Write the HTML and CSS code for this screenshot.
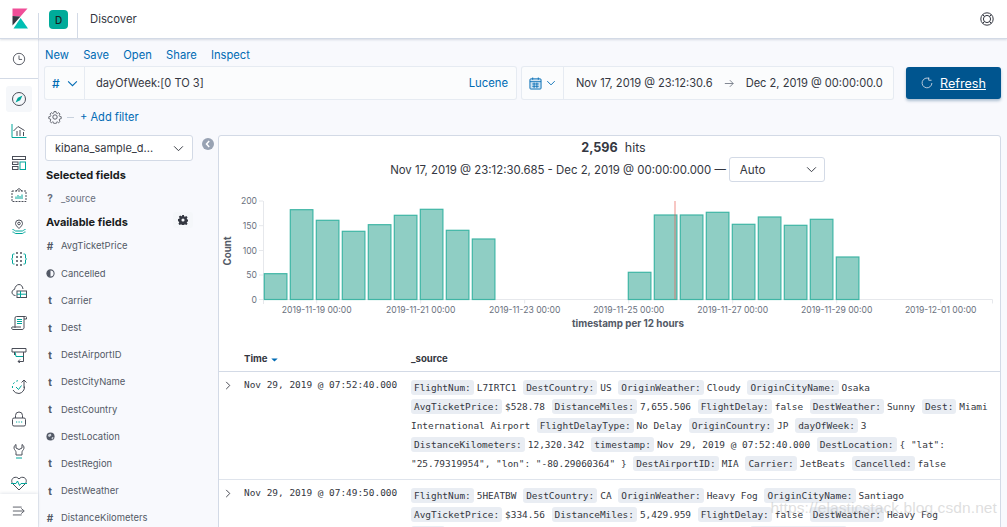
FILE: index.html
```html
<!DOCTYPE html>
<html lang="en">
<head>
<meta charset="utf-8">
<title>Discover - Kibana</title>
<link rel="stylesheet" href="styles.css">
</head>
<body>
<header class="topbar">
  <div class="logo-cell">
    <svg class="logo" viewBox="12 8 17 21" width="17" height="21"><path fill="#f04e98" d="M12.5 8.5H27.5L20.5 16.6 12.5 16Z"/><path fill="#343741" d="M12.5 16 20.5 16.6 12.5 25.5Z"/><path fill="#00bfb3" d="M13.5 28.5 20.6 18 28 28.5Z"/></svg>
  </div>
  <div class="space-cell"><span class="avatar">D</span></div>
  <div class="crumb">Discover</div>
  <svg class="help" viewBox="0 0 14 14" width="14" height="14" fill="none" stroke="#343741"><circle cx="7" cy="7" r="6.2"/><circle cx="7" cy="7" r="3.6"/><path d="M2.6 2.6 4.5 4.5M11.4 2.6 9.5 4.5M2.6 11.4 4.5 9.5M11.4 11.4 9.5 9.5"/></svg>
</header>
<div class="shell">
  <nav class="sidenav">
    <div class="recent">
      <svg viewBox="0 0 16 16" width="14" height="14" fill="none" stroke="#4a4e58"><circle cx="8" cy="8" r="6.5"/><path d="M8 4v4.5h3.5"/></svg>
    </div>
    <ul class="navlist">
      <li class="active"><svg viewBox="0 0 16 16" width="16" height="16" fill="none" stroke="#4a4e58"><circle cx="8" cy="8" r="6.5"/><path fill="#00a69b" stroke="none" d="M11.5 4.5 9.2 9.2 4.5 11.5 6.8 6.8Z"/></svg></li>
      <li><svg viewBox="0 0 16 16" width="16" height="16" fill="none" stroke="#4a4e58"><path d="M1 1v13.5h14.5" stroke="#00a69b"/><path d="M2.5 8 7 3.500 13.500 7.500"/><path d="M6 13V8M9 13V7M12.500 13V9"/></svg></li>
      <li><svg viewBox="0 0 16 16" width="16" height="16" fill="none" stroke="#4a4e58"><rect x="1.500" y="1.500" width="13" height="3"/><rect x="1.500" y="7" width="5.500" height="2.500"/><rect x="1.500" y="11.500" width="5.500" height="3"/><rect x="9" y="7" width="5.500" height="7.500" stroke="#00a69b"/></svg></li>
      <li><svg viewBox="0 0 16 16" width="16" height="16" fill="none" stroke="#4a4e58"><rect x="1" y="4" width="14" height="10.500" stroke-dasharray="2 1"/><path d="M5 4 8 1.500 11 4"/><path stroke="#00a69b" d="M5 12V9.500M7 12V8M9 12V9M11 12V7.500"/></svg></li>
      <li><svg viewBox="0 0 16 16" width="16" height="16" fill="none" stroke="#4a4e58"><path d="M8 9.500C6 7.500 4.500 6 4.500 4.500a3.500 3.500 0 0 1 7 0C11.500 6 10 7.500 8 9.500Z"/><circle cx="8" cy="4.500" r="1.300"/><path stroke="#00a69b" d="M1.500 10.500c2 0 2 1.500 3.200 1.500h6.600c1.200 0 1.200-1.500 3.200-1.500M1.500 13c2 0 2 1.500 3.200 1.500h6.600c1.200 0 1.200-1.500 3.200-1.500"/></svg></li>
      <li><svg viewBox="0 0 16 16" width="16" height="16" fill="none" stroke="#00a69b"><path d="M3.500 3H2.500a1 1 0 0 0-1 1V7L.5 8l1 1v3a1 1 0 0 0 1 1h1M12.500 3h1a1 1 0 0 1 1 1V7l1 1-1 1v3a1 1 0 0 1-1 1h-1"/><g fill="#4a4e58" stroke="none"><circle cx="6" cy="2" r="1"/><circle cx="10" cy="2" r="1"/><circle cx="6" cy="6" r="1"/><circle cx="10" cy="6" r="1"/><circle cx="6" cy="10" r="1"/><circle cx="10" cy="10" r="1"/><circle cx="6" cy="14" r="1"/><circle cx="10" cy="14" r="1"/></g></svg></li>
      <li><svg viewBox="0 0 16 16" width="16" height="16" fill="none" stroke="#4a4e58"><path d="M4.500 12.500C2 12.500.8 10.500 1 9c.2-1.500 1.500-2.500 2.500-2.500C4 3.500 6 1.500 8 1.500c2 0 3.500 1.500 4 4.500"/><rect x="6" y="8" width="9.500" height="6.500"/><path stroke="#00a69b" d="M6 11.200h9.500M9.500 8v6.500"/></svg></li>
      <li><svg viewBox="0 0 16 16" width="16" height="16" fill="none" stroke="#4a4e58"><path d="M4 13V3a1.500 1.500 0 0 1 1.500-1.500H14.500a1 1 0 0 1 1 1V4H13"/><path d="M13 2v10a2 2 0 0 1-2 2.500H2a1.500 1.500 0 0 1-1-2.500h9"/><path stroke="#00a69b" d="M6 4.500h5M6 6.500h5M6 8.500h5"/></svg></li>
      <li><svg viewBox="0 0 16 16" width="16" height="16" fill="none" stroke="#4a4e58"><path d="M1 1.500h14v3.500H1Z"/><path stroke="#00a69b" d="M4 5l1 4.500h8"/><path d="M3.500 5v3M12.500 5v9.500H7M9 12.500 7 14.500 9 16"/></svg></li>
      <li><svg viewBox="0 0 16 16" width="16" height="16" fill="none" stroke="#4a4e58"><path d="M13.500 7.500A6.500 6.500 0 0 1 8 14.500M13 9V1M10.500 3.500 13 1l2.500 2.500M8 14.500A6.500 6.500 0 0 1 2 11"/><path stroke="#00a69b" stroke-dasharray="2 2" d="M1.500 9A6.500 6.500 0 0 1 7 1.700"/><path stroke="#00a69b" d="M5 8 7.500 10.500 10.500 6.500"/></svg></li>
      <li><svg viewBox="0 0 16 16" width="16" height="16" fill="none" stroke="#4a4e58"><rect x="1.500" y="7" width="13" height="8" rx="1.500"/><path d="M4.500 7V4.500a3.500 3.500 0 0 1 7 0V7"/><path stroke="#00a69b" d="M5 11h1.200M7.500 11h1.200M10 11h1.200"/></svg></li>
      <li><svg viewBox="0 0 16 16" width="16" height="16" fill="none" stroke="#4a4e58"><path d="M5 1.500C3 2.500 2.500 5 3.500 6.500c.7 1 1.500 1.500 1.500 3v2.500h6V9.500c0-1.500.8-2 1.500-3 1-1.500.5-4-1.500-5V5L8 6.500 5 5Z"/><path stroke="#00a69b" d="M5 15h6"/></svg></li>
      <li><svg viewBox="0 0 16 16" width="16" height="16" fill="none" stroke="#4a4e58"><path d="M8 15 2 9C0 7 .5 4 2.500 2.800 4.500 1.700 6.800 2.300 8 4c1.200-1.700 3.500-2.300 5.500-1.200C15.500 4 16 7 14 9Z"/><path stroke="#00a69b" fill="#fff" d="M0 8.500h5l1.500-2.500 2 4.500 1.500-2h6"/></svg></li>
    </ul>
    <div class="collapse-nav">
      <svg viewBox="0 0 16 16" width="14" height="14" fill="none" stroke="#4a4e58"><path d="M1 3.500h10M1 8h12M1 12.500h10M10.500 5 14 8l-3.500 3"/></svg>
    </div>
  </nav>
  <main class="content">
    <div class="menu">
      <a>New</a><a>Save</a><a>Open</a><a>Share</a><a>Inspect</a>
    </div>
    <div class="querybar">
      <div class="query">
        <div class="lang-pick">
          <span class="hash">#</span>
          <svg viewBox="0 0 12 8" width="11" height="7" fill="none" stroke="#006bb4" stroke-width="1.200"><path d="M1 1.500 6 6.500 11 1.500"/></svg>
        </div>
        <div class="query-text">dayOfWeek:[0 TO 3]</div>
        <a class="lucene">Lucene</a>
      </div>
      <div class="dates">
        <div class="cal-pick">
          <svg viewBox="0 0 14 14" width="13" height="13" fill="none" stroke="#006bb4"><rect x="1" y="2" width="12" height="11" rx="1" fill="#cfe3f2"/><path d="M1 5h12M4 .5v2.500M10 .5v2.500M3.500 7.500h7M3.500 10h7M5.500 6v6M8.500 6v6" stroke-width=".9"/></svg>
          <svg viewBox="0 0 12 8" width="10" height="6" fill="none" stroke="#006bb4" stroke-width="1.200"><path d="M1 1.500 6 6.500 11 1.500"/></svg>
        </div>
        <div class="date-range">
          <span>Nov 17, 2019 @ 23:12:30.6</span>
          <svg viewBox="0 0 12 10" width="10" height="9" fill="none" stroke="#69707d"><path d="M1 5h10M7 1l4 4-4 4"/></svg>
          <span>Dec 2, 2019 @ 00:00:00.0</span>
        </div>
      </div>
      <button class="refresh" type="button">
        <svg viewBox="0 0 14 14" width="12" height="12" fill="none" stroke="#d3dae6"><path d="M9.500 1.800A5.700 5.700 0 1 0 12.700 7M9 .5v3.300h3.300"/></svg>
        <span>Refresh</span>
      </button>
    </div>
    <div class="filters">
      <svg viewBox="0 0 16 16" width="14" height="14" fill="none" stroke="#4a4e58"><path d="M6.800 1h2.400l.4 2 1.300.6 1.800-1.100 1.700 1.700-1.100 1.800.6 1.300 2 .4v2.400l-2 .4-.6 1.300 1.100 1.800-1.700 1.700-1.800-1.100-1.300.6-.4 2H6.800l-.4-2-1.300-.6-1.800 1.100-1.700-1.700 1.100-1.800-.6-1.300-2-.4V7.700l2-.4.600-1.300-1.100-1.800 1.700-1.700 1.800 1.100 1.300-.6Z" transform="translate(.8 .8) scale(.9)"/><circle cx="8" cy="8" r="2.500"/></svg>
      <span class="dash"></span>
      <a class="add-filter">+ Add filter</a>
    </div>
    <div class="workspace">
      <aside class="fields">
        <div class="index-row">
          <div class="index-pick">
            <span>kibana_sample_d...</span>
            <svg viewBox="0 0 12 8" width="11" height="7" fill="none" stroke="#343741" stroke-width="1.100"><path d="M1 1.500 6 6.500 11 1.500"/></svg>
          </div>
          <span class="collapse-fields"><svg viewBox="0 0 12 12" width="12" height="12"><circle cx="6" cy="6" r="6" fill="#98a2b3"/><path d="M7.200 3 4.500 6l2.700 3" fill="none" stroke="#fff" stroke-width="1.500"/></svg></span>
        </div>
        <h3 class="f-head">Selected fields</h3>
        <div class="f-row sel"><b class="f-ico">?</b><span>_source</span></div>
        <div class="avail">
          <h3 class="f-head">Available fields</h3>
          <span class="cog"><svg viewBox="0 0 16 16" width="10" height="10"><path fill="#343741" fill-rule="evenodd" d="M6.500 0h3l.4 2.300 1.300.6 2-1.300 2.100 2.100-1.300 2 .6 1.300 2.300.4v3l-2.300.4-.6 1.300 1.300 2-2.100 2.100-2-1.300-1.300.6-.4 2.300h-3l-.4-2.300-1.300-.6-2 1.300-2.100-2.100 1.300-2-.6-1.300L-.300 9.500v-3l2.300-.4.600-1.300-1.300-2 2.100-2.100 2 1.300 1.300-.6ZM8 5.500a2.500 2.500 0 1 0 0 5 2.500 2.500 0 0 0 0-5Z"/></svg></span>
        </div>
        <ul class="f-list">
          <li class="f-row"><b class="f-ico">#</b><span>AvgTicketPrice</span></li>
          <li class="f-row"><span class="f-ico"><svg viewBox="0 0 10 10" width="9" height="9"><circle cx="5" cy="5" r="4" fill="none" stroke="#535966" stroke-width="1.200"/><path d="M5 1a4 4 0 0 1 0 8Z" fill="#535966" transform="matrix(-1 0 0 1 10 0)"/></svg></span><span>Cancelled</span></li>
          <li class="f-row"><b class="f-ico">t</b><span>Carrier</span></li>
          <li class="f-row"><b class="f-ico">t</b><span>Dest</span></li>
          <li class="f-row"><b class="f-ico">t</b><span>DestAirportID</span></li>
          <li class="f-row"><b class="f-ico">t</b><span>DestCityName</span></li>
          <li class="f-row"><b class="f-ico">t</b><span>DestCountry</span></li>
          <li class="f-row"><span class="f-ico"><svg viewBox="0 0 10 10" width="9" height="9"><circle cx="5" cy="5" r="4.500" fill="#535966"/><path d="M3 2.500 5.500 2 6 4 4 5.500 2 4.500ZM7 5.500 8.500 6 7 8.500 6 7Z" fill="#cdd2da"/></svg></span><span>DestLocation</span></li>
          <li class="f-row"><b class="f-ico">t</b><span>DestRegion</span></li>
          <li class="f-row"><b class="f-ico">t</b><span>DestWeather</span></li>
          <li class="f-row"><b class="f-ico">#</b><span>DistanceKilometers</span></li>
        </ul>
      </aside>
      <section class="results">
        <div class="hits"><b>2,596</b><span>hits</span></div>
        <div class="range-row">
          <span>Nov 17, 2019 @ 23:12:30.685 - Dec 2, 2019 @ 00:00:00.000 —</span>
          <div class="interval"><span>Auto</span><svg viewBox="0 0 12 8" width="11" height="7" fill="none" stroke="#343741" stroke-width="1.100"><path d="M1 1.500 6 6.500 11 1.500"/></svg></div>
        </div>
        <svg class="chart" viewBox="219 190 781 146" width="781" height="146">
          <g class="grid-axis">
            <path d="M263.500 200V303M259 200h4M259 224.700h4M259 249.500h4M259 274h4M259 298.500h4M263.500 298.500H992.500M316.700 298.500v4M420.700 298.500v4M524.700 298.500v4M628.700 298.500v4M732.700 298.500v4M836.700 298.500v4M940.700 298.500v4M992.500 298.500v4"/>
          </g>
          <g class="bars">
            <rect x="264.300" y="272.700" width="22.600" height="25.800"/>
            <rect x="290.300" y="208.700" width="22.600" height="89.800"/>
            <rect x="316.300" y="219.300" width="22.600" height="79.200"/>
            <rect x="342.300" y="230.300" width="22.600" height="68.200"/>
            <rect x="368.300" y="223.700" width="22.600" height="74.800"/>
            <rect x="394.300" y="214.300" width="22.600" height="84.200"/>
            <rect x="420.300" y="208.300" width="22.600" height="90.200"/>
            <rect x="446.300" y="229.300" width="22.600" height="69.200"/>
            <rect x="472.300" y="238" width="22.600" height="60.500"/>
            <rect x="628.300" y="271.300" width="22.600" height="27.200"/>
            <rect x="654.300" y="214" width="22.600" height="84.500"/>
            <rect x="680.300" y="214" width="22.600" height="84.500"/>
            <rect x="706.300" y="211.300" width="22.600" height="87.200"/>
            <rect x="732.300" y="223.300" width="22.600" height="75.200"/>
            <rect x="758.300" y="216" width="22.600" height="82.500"/>
            <rect x="784.300" y="224.300" width="22.600" height="74.200"/>
            <rect x="810.300" y="218.300" width="22.600" height="80.200"/>
            <rect x="836.300" y="256" width="22.600" height="42.500"/>
          </g>
          <path class="now" d="M675 200V298"/>
          <g class="tick-y">
            <text x="257" y="203">200</text>
            <text x="257" y="228">150</text>
            <text x="257" y="253">100</text>
            <text x="257" y="277">50</text>
            <text x="257" y="302">0</text>
          </g>
          <g class="tick-x">
            <text x="316.700" y="312">2019-11-19 00:00</text>
            <text x="420.700" y="312">2019-11-21 00:00</text>
            <text x="524.700" y="312">2019-11-23 00:00</text>
            <text x="628.700" y="312">2019-11-25 00:00</text>
            <text x="732.700" y="312">2019-11-27 00:00</text>
            <text x="836.700" y="312">2019-11-29 00:00</text>
            <text x="940.700" y="312">2019-12-01 00:00</text>
          </g>
          <text class="axis-title" x="628" y="326">timestamp per 12 hours</text>
          <text class="axis-title" transform="translate(231 250) rotate(-90)">Count</text>
        </svg>
        <div class="doc-head"><div class="th-time">Time <svg viewBox="0 0 8 5" width="7" height="4"><path d="M0 .5h8L4 4.500Z" fill="#006bb4"/></svg></div><div class="th-src">_source</div></div>
        <div class="doc">
          <svg class="exp" viewBox="0 0 6 10" width="6" height="9" fill="none" stroke="#343741"><path d="M1 1l4 4-4 4"/></svg>
          <div class="time">Nov 29, 2019 @ 07:52:40.000</div>
          <dl class="src"><dt>FlightNum:</dt><dd>L7IRTC1</dd> <dt>DestCountry:</dt><dd>US</dd> <dt>OriginWeather:</dt><dd>Cloudy</dd> <dt>OriginCityName:</dt><dd>Osaka</dd> <dt>AvgTicketPrice:</dt><dd>$528.78</dd> <dt>DistanceMiles:</dt><dd>7,655.506</dd> <dt>FlightDelay:</dt><dd>false</dd> <dt>DestWeather:</dt><dd>Sunny</dd> <dt>Dest:</dt><dd>Miami International Airport</dd> <dt>FlightDelayType:</dt><dd>No Delay</dd> <dt>OriginCountry:</dt><dd>JP</dd> <dt>dayOfWeek:</dt><dd>3</dd> <dt>DistanceKilometers:</dt><dd>12,320.342</dd> <dt>timestamp:</dt><dd>Nov 29, 2019 @ 07:52:40.000</dd> <dt>DestLocation:</dt><dd>{ "lat": "25.79319954", "lon": "-80.29060364" }</dd> <dt>DestAirportID:</dt><dd>MIA</dd> <dt>Carrier:</dt><dd>JetBeats</dd> <dt>Cancelled:</dt><dd>false</dd></dl>
        </div>
        <div class="doc">
          <svg class="exp" viewBox="0 0 6 10" width="6" height="9" fill="none" stroke="#343741"><path d="M1 1l4 4-4 4"/></svg>
          <div class="time">Nov 29, 2019 @ 07:49:50.000</div>
          <dl class="src"><dt>FlightNum:</dt><dd>5HEATBW</dd> <dt>DestCountry:</dt><dd>CA</dd> <dt>OriginWeather:</dt><dd>Heavy Fog</dd> <dt>OriginCityName:</dt><dd>Santiago</dd> <dt>AvgTicketPrice:</dt><dd>$334.56</dd> <dt>DistanceMiles:</dt><dd>5,429.959</dd> <dt>FlightDelay:</dt><dd>false</dd> <dt>DestWeather:</dt><dd>Heavy Fog</dd> <dt>Dest:</dt><dd>Comodoro Arturo Merino Benitez International Airport</dd> <dt>FlightDelayType:</dt><dd>No Delay</dd></dl>
        </div>
      </section>
    </div>
  </main>
</div>
<div class="watermark">https://elasticstack.blog.csdn.net</div>
</body>
</html>
```
FILE: styles.css
```css
* { box-sizing: border-box; }
html, body { margin: 0; padding: 0; }
body {
  width: 1007px;
  height: 527px;
  overflow: hidden;
  position: relative;
  font-family: Inter, "Noto Sans", "Liberation Sans", sans-serif;
  color: #343741;
  background: #f8f9fd;
  display: flex;
  flex-direction: column;
}
ul, dl, dd, h3 { margin: 0; padding: 0; list-style: none; }

.topbar {
  flex: 0 0 39px;
  height: 39px;
  display: flex;
  align-items: stretch;
  background: #fff;
  border-bottom: 1px solid #d3dae6;
  box-shadow: 0 1px 2px rgba(152,162,179,.35);
  position: relative;
  z-index: 2;
}
.logo-cell { width: 39px; position: relative; display: flex; padding: 8px 0 0 12px; }
.logo-cell::after, .space-cell::after {
  content: ""; position: absolute; right: 0; top: 13px; bottom: 0; width: 1px; background: #d3dae6;
}
.logo { display: block; }
.space-cell { width: 39px; position: relative; display: flex; justify-content: center; padding-top: 10px; }
.avatar {
  width: 19px; height: 19px; border-radius: 4px; background: #00ab9a; color: #1a1c21;
  font-size: 10px; font-weight: 500; display: flex; align-items: center; justify-content: center;
}
.crumb { margin-left: 12px; font-size: 11.300px; line-height: 38px; font-weight: 400; }
.help { margin: 12px 13px 0 auto; }

.shell { flex: 1; display: flex; min-height: 0; }
.sidenav {
  flex: 0 0 39px;
  background: #fff;
  border-right: 1px solid #e4e8f0;
  display: flex;
  flex-direction: column;
  position: relative;
}
.recent {
  height: 40px; display: flex; align-items: center; justify-content: center;
  border-bottom: 1px solid #d3dae6; flex: 0 0 40px;
}
.navlist { padding-top: 7px; flex: 1; }
.navlist li {
  width: 26px; height: 26px; margin: 0 0 6px 6px; border-radius: 3px;
  display: flex; align-items: center; justify-content: center;
}
.navlist li.active { background: #f5f7fa; }
.navlist svg { display: block; }
.collapse-nav {
  position: absolute; left: 0; right: 0; bottom: 0; height: 33px; background: #fff;
  display: flex; align-items: center; justify-content: center;
  box-shadow: 0 -1px 3px rgba(152,162,179,.25);
}

.content { flex: 1; min-width: 0; padding: 0 6px 0 6px; }
.menu { display: flex; gap: 14.250px; height: 28px; align-items: center; padding-top: 4px; }
.menu a { color: #006bb4; font-size: 11.200px; }

.querybar { display: flex; height: 32px; }
.query {
  width: 471px; display: flex; align-items: center; background: #fbfcfd;
  box-shadow: 0 0 0 1px #e6ebf2; border-radius: 2px;
}
.lang-pick {
  width: 40px; height: 100%; display: flex; align-items: center; gap: 7px; padding-left: 7px;
  border-right: 1px solid #e6ebf2;
}
.hash { color: #006bb4; font-size: 12px; font-weight: 500; }
.query-text { margin-left: 11px; font-size: 11.100px; flex: 1; }
.lucene { color: #006bb4; font-size: 11.300px; margin-right: 8px; }
.dates {
  width: 371px; margin-left: 6px; display: flex; align-items: center; background: #fbfcfd;
  box-shadow: 0 0 0 1px #e6ebf2; border-radius: 2px;
}
.cal-pick {
  width: 42px; height: 100%; display: flex; align-items: center; gap: 4px; padding-left: 7px;
  border-right: 1px solid #e6ebf2; flex: 0 0 42px;
}
.date-range {
  flex: 1; display: flex; align-items: center; font-size: 11.100px; padding: 0 12px; gap: 11.500px;
  white-space: nowrap;
}
.refresh {
  width: 95px; margin-left: 13px; border: 0; border-radius: 3px; background: #00558f; color: #fff;
  display: flex; align-items: center; justify-content: center; gap: 7px;
  font: 400 12.600px Inter, "Liberation Sans", sans-serif;
  box-shadow: 0 2px 3px rgba(0,60,110,.3);
}
.refresh span { text-decoration: underline; }

.filters { display: flex; align-items: center; height: 36px; padding-left: 3px; }
.dash { width: 7px; height: 1px; background: #c9d2de; margin: 0 6px 0 5px; }
.add-filter { color: #006bb4; font-size: 11.100px; }

.workspace { display: flex; align-items: flex-start; gap: 4px; }
.fields { flex: 0 0 169px; }
.index-row { display: flex; align-items: flex-start; gap: 9px; }
.index-pick {
  width: 148px; flex: 0 0 148px; height: 26px; background: #fff; border: 1px solid #d3dae6; border-radius: 3px;
  display: flex; align-items: center; justify-content: space-between; padding: 0 8px 0 9px;
  font-size: 11px;
}
.collapse-fields { display: block; margin-top: 3px; height: 12px; }
.collapse-fields svg { display: block; }
.f-head { font-size: 11px; font-weight: 700; color: #1a1c21; line-height: 16px; padding-left: 1px; }
.index-row + .f-head { margin-top: 6px; }
.f-row { display: flex; align-items: center; height: 27.200px; font-size: 9.450px; color: #535966; }
.f-row.sel { height: 24px; margin-top: 3px; color: #69707d; }
.f-ico {
  flex: 0 0 10px; width: 10px; margin-right: 6px; display: flex; justify-content: center; font-weight: 700;
  font-size: 10px;
}
.f-ico svg { display: block; }
.avail { display: flex; justify-content: space-between; align-items: center; width: 148px; margin-top: 2px; }
.cog {
  width: 20px; height: 16px; display: flex; align-items: center; justify-content: center;
  background: #f5f7fa; border-radius: 3px; margin-bottom: 3px;
}
.f-list { margin-top: 1.400px; }

.results {
  width: 783px; flex: 0 0 783px; height: 500px; background: #fff; border: 1px solid #d3dae6;
  border-radius: 3px;
}
.hits {
  height: 21px; display: flex; align-items: center; justify-content: center; gap: 7px; font-size: 12.500px;
  padding: 2px 0 0 8px;
}
.hits b { font-size: 12.600px; font-weight: 700; }
.range-row {
  height: 25px; display: flex; align-items: center; justify-content: center; gap: 3px;
  font-size: 11.400px; padding-right: 4px;
}
.interval {
  width: 96px; height: 25px; border: 1px solid #d3dae6; border-radius: 3px; display: flex;
  align-items: center; justify-content: space-between; padding: 0 7px 0 10px; font-size: 11.600px;
}
.chart { display: block; margin-top: 9px; }
.grid-axis path { fill: none; stroke: #e6e8ec; stroke-width: 1; }
.bars rect { fill: #8fcec4; stroke: #3fb5a5; stroke-width: 1.200; }
.now { stroke: #e65a50; stroke-opacity: .45; stroke-width: 1.500; fill: none; }
.tick-y text { font-size: 8.600px; fill: #69707d; text-anchor: end; }
.tick-x text { font-size: 8.600px; fill: #69707d; text-anchor: middle; }
.axis-title { font-size: 9.800px; font-weight: 700; fill: #535966; text-anchor: middle; }

.doc-head {
  display: grid; grid-template-columns: 192px 1fr; height: 35px; align-items: center;
  border-bottom: 1px solid #d3dae6; font-size: 9.600px; font-weight: 700; padding-top: 8px;
}
.th-time { padding-left: 25px; }
.th-time svg { margin-left: 1px; }
.doc {
  display: grid; grid-template-columns: 25px 167px 1fr; border-bottom: 1px solid #dfe4ec;
  padding: 6px 8px 6px 0;
  font-family: "DejaVu Sans Mono", "Liberation Mono", monospace;
  font-size: 9.430px; line-height: 19px;
}
.exp { margin: 3px 0 0 6px; }
.time { line-height: 13px; }
.src { overflow-wrap: anywhere; }
.src dt {
  display: inline; background: #e9edf3; padding: 2px 3px; margin-right: 3px; border-radius: 3px;
}
.src dd { display: inline; margin-right: 1px; }

.watermark {
  position: absolute; right: 10px; bottom: 10px; font-size: 15.500px; line-height: 18px; letter-spacing: .1px;
  color: rgba(190,190,190,.5); font-family: "Liberation Sans", sans-serif; pointer-events: none; z-index: 3;
}
```
